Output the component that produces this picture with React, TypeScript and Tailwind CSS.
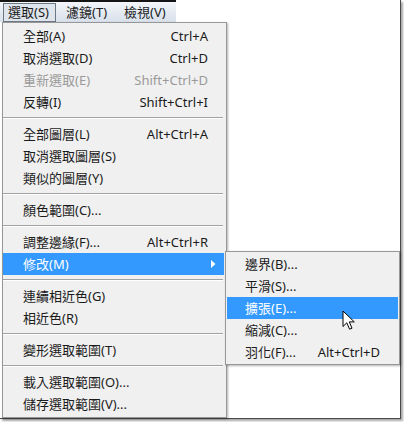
import React from "react";

type Item = { label: string; shortcut?: string; disabled?: boolean; active?: boolean; arrow?: boolean } | "sep";

const mainItems: Item[] = [
  { label: "全部(A)", shortcut: "Ctrl+A" },
  { label: "取消選取(D)", shortcut: "Ctrl+D" },
  { label: "重新選取(E)", shortcut: "Shift+Ctrl+D", disabled: true },
  { label: "反轉(I)", shortcut: "Shift+Ctrl+I" },
  "sep",
  { label: "全部圖層(L)", shortcut: "Alt+Ctrl+A" },
  { label: "取消選取圖層(S)" },
  { label: "類似的圖層(Y)" },
  "sep",
  { label: "顏色範圍(C)..." },
  "sep",
  { label: "調整邊緣(F)...", shortcut: "Alt+Ctrl+R" },
  { label: "修改(M)", active: true, arrow: true },
  "sep",
  { label: "連續相近色(G)" },
  { label: "相近色(R)" },
  "sep",
  { label: "變形選取範圍(T)" },
  "sep",
  { label: "載入選取範圍(O)..." },
  { label: "儲存選取範圍(V)..." },
];

const subItems: Item[] = [
  { label: "邊界(B)..." },
  { label: "平滑(S)..." },
  { label: "擴張(E)...", active: true },
  { label: "縮減(C)..." },
  { label: "羽化(F)...", shortcut: "Alt+Ctrl+D" },
];

const Row = ({ item, sub }: { item: Item; sub?: boolean }) => {
  if (item === "sep") {
    return (
      <div className="h-[10px] flex flex-col justify-center">
        <div className="h-px bg-[#a3a3a3] mr-[3px]" />
        <div className="h-px bg-white mr-[3px]" />
      </div>
    );
  }
  const color = item.active ? "text-white bg-[#3399ff]" : item.disabled ? "text-[#9a9a9a]" : "text-[#1b1b1b]";
  return (
    <div
      className={`h-[22px] flex items-center justify-between ${color} ${
        sub ? "pl-[18px] pr-[18px] mx-px" : "pl-[20px] pr-[16px] mr-[2px]"
      }`}
    >
      <span>{item.label}</span>
      {item.shortcut && <span>{item.shortcut}</span>}
      {item.arrow && (
        <svg width="5" height="8" viewBox="0 0 5 8" className="mr-[-8px]">
          <path d="M0 0 L4.5 4 L0 8 Z" fill="white" />
        </svg>
      )}
    </div>
  );
};

const App = () => {
  return (
    <div
      className="w-[404px] h-[422px] bg-white overflow-hidden text-[13px] leading-none"
      style={{ fontFamily: '"Noto Sans", "Noto Sans CJK TC", sans-serif' }}
    >
      <div className="relative w-[401px] h-[419px] bg-white border-r border-b border-[#4a4a4a] shadow-[2px_2px_2px_rgba(0,0,0,0.35)]">
        <div className="flex h-[22px] w-[176px] border-t-2 border-[#151515] bg-linear-to-b from-[#f3f6fa] to-[#d8e0eb] text-[#1b1b1b]">
          <div className="ml-[3px] mt-px w-[53px] h-[19px] border border-[#6d7784] bg-[#dfe5ec] pl-[4px] flex items-center">
            選取(S)
          </div>
          <div className="ml-[10px] h-[20px] flex items-center">濾鏡(T)</div>
          <div className="ml-[17px] h-[20px] flex items-center">檢視(V)</div>
        </div>

        <div className="ml-[2px] w-[225px] border border-[#979797] bg-[#f0f0f0] py-[2px] shadow-[1px_1px_2px_rgba(0,0,0,0.3)]">
          {mainItems.map((it, i) => (
            <Row key={i} item={it} />
          ))}
        </div>

        <div className="absolute left-[225px] top-[251px] w-[175px] border border-[#979797] bg-[#f0f0f0] py-px shadow-[1px_1px_2px_rgba(0,0,0,0.3)]">
          {subItems.map((it, i) => (
            <Row key={i} item={it} sub />
          ))}
        </div>

        <svg className="absolute left-[342px] top-[310px]" width="14" height="21" viewBox="0 0 14 21">
          <path
            d="M1 1 L1 16.5 L4.8 12.8 L7.6 19.2 L10 18.2 L7.3 11.9 L12.3 11.9 Z"
            fill="white"
            stroke="black"
            strokeWidth="1"
            strokeLinejoin="miter"
          />
        </svg>
      </div>
    </div>
  );
};

export default App;
